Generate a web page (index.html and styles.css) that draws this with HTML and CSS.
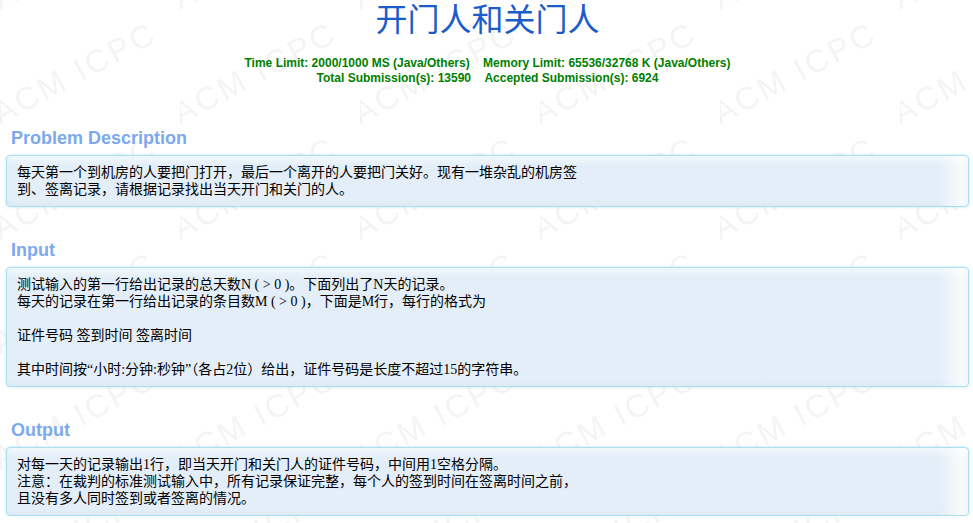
FILE: index.html
```html
<!DOCTYPE html>
<html lang="zh-CN">
<head>
<meta charset="utf-8">
<title>开门人和关门人</title>
<link rel="stylesheet" href="styles.css">
</head>
<body>
<div class="page">
  <h1 class="title">开门人和关门人</h1>
  <div class="limits">
    <span>Time Limit: 2000/1000 MS (Java/Others)&nbsp;&nbsp;&nbsp;&nbsp;Memory Limit: 65536/32768 K (Java/Others)</span><br>
    <span>Total Submission(s): 13590&nbsp;&nbsp;&nbsp;&nbsp;Accepted Submission(s): 6924</span>
  </div>

  <section class="panel panel-first">
    <div class="panel-title">Problem Description</div>
    <div class="panel-content">每天第一个到机房的人要把门打开，最后一个离开的人要把门关好。现有一堆杂乱的机房签<br>到、签离记录，请根据记录找出当天开门和关门的人。</div>
  </section>

  <section class="panel">
    <div class="panel-title">Input</div>
    <div class="panel-content">测试输入的第一行给出记录的总天数N ( &gt; 0 )。下面列出了N天的记录。<br>每天的记录在第一行给出记录的条目数M ( &gt; 0 )，下面是M行，每行的格式为<br><br>证件号码 签到时间 签离时间<br><br>其中时间按“小时:分钟:秒钟”（各占2位）给出，证件号码是长度不超过15的字符串。</div>
  </section>

  <section class="panel">
    <div class="panel-title">Output</div>
    <div class="panel-content">对每一天的记录输出1行，即当天开门和关门人的证件号码，中间用1空格分隔。<br>注意：在裁判的标准测试输入中，所有记录保证完整，每个人的签到时间在签离时间之前，<br>且没有多人同时签到或者签离的情况。</div>
  </section>
</div>
</body>
</html>
```

FILE: styles.css
```css
html, body {
  margin: 0;
  padding: 0;
}

body {
  background-color: #ffffff;
  background-image: url("data:image/svg+xml;utf8,<svg xmlns='http://www.w3.org/2000/svg' width='180' height='115'><g fill='%23f4f4f4' font-family='Liberation Sans, Arial, sans-serif' font-size='32' letter-spacing='3'><text transform='translate(0 10) rotate(-28)'>ACM ICPC</text><text transform='translate(0 125) rotate(-28)'>ACM ICPC</text></g></svg>");
  background-repeat: repeat;
  font-family: "Liberation Serif", "Noto Sans CJK SC", serif;
  color: #000;
}

.page {
  padding: 0 4px 0 6px;
}

.title {
  margin: 0;
  text-align: center;
  font-family: "Noto Sans CJK SC", sans-serif;
  font-weight: normal;
  font-size: 32px;
  line-height: 34px;
  color: #1a5cc8;
}

.limits {
  margin-top: 22px;
  text-align: center;
  font-family: "Liberation Sans", Arial, sans-serif;
  font-weight: bold;
  font-size: 12px;
  line-height: 15px;
  color: #008000;
}

.panel {
  margin-top: 32px;
}

.panel-first {
  margin-top: 41px;
}

.panel-title {
  padding-left: 5px;
  font-family: "Liberation Sans", Arial, sans-serif;
  font-weight: bold;
  font-size: 18px;
  line-height: 22px;
  color: #7ca9ed;
}

.panel-content {
  margin-top: 6px;
  padding: 8px 10px;
  border: 1px solid #a6e0f0;
  border-radius: 4px;
  box-shadow: 0 0 3px rgba(140, 215, 240, 0.55);
  background:
    linear-gradient(to right, rgba(255, 255, 255, 0) calc(100% - 30px), rgba(255, 255, 255, 0.75) calc(100% - 8px), rgba(255, 255, 255, 0.6) 100%),
    linear-gradient(to bottom, #f2f7fc 0, #e3eef8 10px, #e3eef8 calc(100% - 6px), #dfeaf4 100%);
  font-family: "Liberation Serif", "Noto Sans CJK SC", serif;
  font-size: 14px;
  line-height: 17px;
  color: #000;
}
```
